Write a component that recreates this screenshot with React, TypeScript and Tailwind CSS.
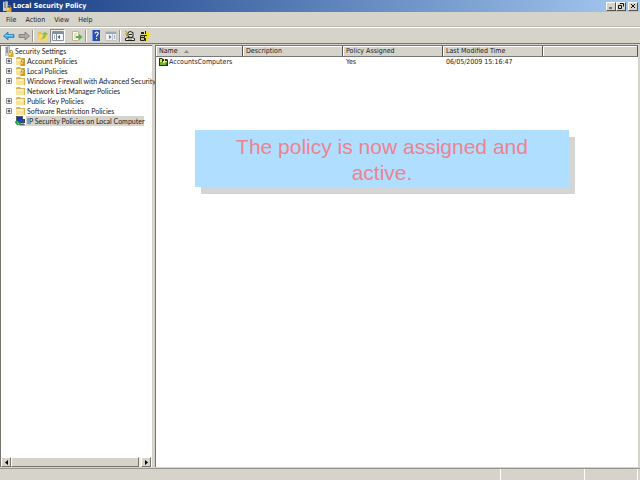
import type { ReactNode } from "react";
import clsx from "clsx";

type TreeItem = {
  label: string;
  icon: "locked" | "folder" | "ipsec";
  expandable: boolean;
  selected?: boolean;
};

const menus = ["File", "Action", "View", "Help"];

const treeItems: TreeItem[] = [
  { label: "Account Policies", icon: "locked", expandable: true },
  { label: "Local Policies", icon: "locked", expandable: true },
  { label: "Windows Firewall with Advanced Security", icon: "folder", expandable: true },
  { label: "Network List Manager Policies", icon: "folder", expandable: false },
  { label: "Public Key Policies", icon: "folder", expandable: true },
  { label: "Software Restriction Policies", icon: "folder", expandable: true },
  { label: "IP Security Policies on Local Computer", icon: "ipsec", expandable: false, selected: true },
];

const headerCell =
  "h-[11px] border-r border-b border-r-[#555] border-b-[#777] bg-[#d6d3cb] p-0 text-left font-normal shadow-[inset_1px_1px_0_#fff]";

function ServerLockIcon() {
  return (
    <svg viewBox="0 0 10 11" className="h-[11px] w-[10px] shrink-0">
      <path d="M1 1l4-1 1 1v9H1z" fill="#a9adb2" />
      <path d="M1 1h4v9H1z" fill="#c9cdd1" />
      <path d="M2 2h2M2 4h2M2 6h2" stroke="#59616b" />
      <path d="M6 7V5.500a1.200 1.200 0 0 1 2.400 0V7" fill="none" stroke="#8d7a42" />
      <path d="M4.500 6.500h5V11h-5z" fill="#dda929" />
      <path d="M5 7h2v2H5z" fill="#f6d66c" />
    </svg>
  );
}

function FolderIcon({ locked = false }: { locked?: boolean }) {
  return (
    <svg viewBox="0 0 11 10" className="h-[10px] w-[11px] shrink-0">
      <path d="M1 2l1-1h3l1 1h4v7H1z" fill="#d9b455" />
      <path d="M1 3h8v6H1z" fill="#f9e29a" />
      <path d="M2 3h6v2H2z" fill="#fdf1c2" />
      {locked && (
        <>
          <path d="M6.500 6V4.500a1.300 1.300 0 0 1 2.600 0V6" fill="none" stroke="#8d7a42" />
          <path d="M5.500 5.500H10V10H5.500z" fill="#d69b1d" />
          <path d="M6 6h2v2H6z" fill="#f0c44a" />
        </>
      )}
    </svg>
  );
}

function IpSecurityIcon() {
  return (
    <svg viewBox="0 0 11 10" className="h-[10px] w-[11px] shrink-0">
      <path d="M1 0h7v6H1z" fill="#59616b" />
      <path d="M2 1h5v4H2z" fill="#1530b0" />
      <path d="M4 3h6v4H4z" fill="#3a4350" />
      <path d="M5 4h4v2H5z" fill="#2045d6" />
      <path d="M4 7.500h5l1.500 2H5z" fill="#59616b" />
      <path d="M0 5.500L2.500 4v1.300L6 7 4.500 9.500 3 8.500v1L.5 7.500z" fill="#16a336" />
      <path d="M2 6l2 2" stroke="#80e68c" strokeWidth=".8" />
    </svg>
  );
}

function PolicyIcon() {
  return (
    <svg viewBox="0 0 10 8" className="h-[8px] w-[10px] shrink-0">
      <path d="M0 0h3l1 1h4l1 1v6H0z" fill="#1f3a10" />
      <path d="M1 4h7l-1 3H1z" fill="#6bb52f" />
      <path d="M1 1h2v3H1z" fill="#e5d84c" />
      <path d="M5 1h1v2h2v1H6v1H4V3h1z" fill="#f1ec6b" />
    </svg>
  );
}

function BackIcon() {
  return (
    <svg viewBox="0 0 12 10" className="h-[10px] w-[12px]">
      <path d="M.5 5l4.500-4v2.500h6v3H5V9z" fill="#38a5e6" stroke="#2476b4" strokeWidth=".7" />
      <path d="M2 4.700h8" stroke="#8fd7fb" />
    </svg>
  );
}

function ForwardIcon() {
  return (
    <svg viewBox="0 0 12 10" className="h-[10px] w-[12px]">
      <path d="M11.500 5L7 1v2.500H1v3h6V9z" fill="#a9a9a5" stroke="#777773" strokeWidth=".8" />
    </svg>
  );
}

function UpFolderIcon() {
  return (
    <svg viewBox="0 0 12 12" className="h-[12px] w-[12px]">
      <path d="M1 2h3l1 1h6v8H1z" fill="#e3c05c" />
      <path d="M2 4h9v7H1z" fill="#f3d67a" />
      <path d="M3 9c2 0 3.500-2 3.500-4.500H5L8 1.500l3 3H9C9 7.500 6.500 10 3 9z" fill="#8bbd45" />
    </svg>
  );
}

function ConsoleTreeIcon() {
  return (
    <svg viewBox="0 0 12 10" className="h-[10px] w-[12px]">
      <path d="M.5.5h11v9H.5z" fill="#f7f8f9" stroke="#8b929c" />
      <path d="M1 1h10v2H1z" fill="#7f8fa9" />
      <path d="M4.500 3v6" stroke="#8b929c" />
      <path d="M2 5h1M2 7h1" stroke="#4c6aa5" />
      <path d="M8 4v4L5.500 6z" fill="#2f7546" />
    </svg>
  );
}

function ExportIcon() {
  return (
    <svg viewBox="0 0 12 12" className="h-[12px] w-[12px]">
      <path d="M1.500 1.500h6v9h-6z" fill="#fcfbef" stroke="#c0b88c" />
      <path d="M3 4h3M3 6h2M3 8h3" stroke="#a8a8a0" strokeWidth=".7" />
      <path d="M5 6h3V4l3.500 3L8 10V8H5z" fill="#4ab54a" />
    </svg>
  );
}

function HelpIcon() {
  return (
    <svg viewBox="0 0 10 11" className="h-[11px] w-[10px]">
      <path d="M1 0h8v11H1z" fill="#2850b4" />
      <path d="M1 0h1v11H1z" fill="#7893d8" />
      <path d="M4 3.500c0-2 3.300-1.800 3.200 0C7.100 5 5.500 5 5.500 6.800M5.500 8v1.200" fill="none" stroke="#fff" strokeWidth="1.100" />
    </svg>
  );
}

function ActionPaneIcon() {
  return (
    <svg viewBox="0 0 12 10" className="h-[10px] w-[12px]">
      <path d="M.5.500h11v9H.5z" fill="#f0f0ef" stroke="#c2c3c4" />
      <path d="M1 1h10v2H1z" fill="#9aa7bd" />
      <path d="M7.500 3v6" stroke="#c2c3c4" />
      <path d="M4 4v4l2.500-2z" fill="#5e7693" />
      <path d="M9 5h1M9 7h1" stroke="#4c6aa5" />
    </svg>
  );
}

function CreatePolicyIcon() {
  return (
    <svg viewBox="0 0 12 12" className="h-[12px] w-[12px]">
      <path d="M1.500 10.500v-2L4 7.500h4l2.500 1v2z" fill="#f4f2e8" stroke="#222" />
      <path d="M4 2.500L6 1.500l3 1v4L7 7.500 4 6.500z" fill="#e8e4c8" stroke="#222" />
      <path d="M5 4.500h3" stroke="#222" />
      <path d="M1 1l2 1.500M1 4h2M2 6l1.500-1" stroke="#b49f18" />
      <path d="M4 9h4" stroke="#6b6b60" />
    </svg>
  );
}

function ManageFiltersIcon() {
  return (
    <svg viewBox="0 0 12 12" className="h-[12px] w-[12px]">
      <path d="M1.500 5.500h4v5h-4z" fill="#c9bf6a" stroke="#222" />
      <path d="M2 2h3v2H2zM2 7h3v1H2z" fill="#222" />
      <path d="M7 1h2v10H7z" fill="#efe01e" />
      <path d="M5 4h4V2l3 3-3 3V6H5z" fill="#efe01e" />
      <path d="M4 5.500h4M6.500 1v3M6.500 8v3" stroke="#222" />
    </svg>
  );
}

function ToolButton({ label, pressed = false, children }: { label: string; pressed?: boolean; children: ReactNode }) {
  return (
    <button
      type="button"
      aria-label={label}
      className={clsx(
        "flex h-[14px] w-[15px] items-center justify-center",
        pressed && "border border-t-[#8e8b84] border-r-white border-b-white border-l-[#8e8b84] bg-[#ecebe6]",
      )}
    >
      {children}
    </button>
  );
}

function ToolSeparator() {
  return <span className="mx-px h-3 w-[2px] border-l border-[#99968e] bg-white" />;
}

function WindowButton({ label, children }: { label: string; children: ReactNode }) {
  return (
    <button
      type="button"
      aria-label={label}
      className="flex h-[9px] w-[10px] items-center justify-center border border-t-white border-r-[#55534e] border-b-[#55534e] border-l-white bg-[#d6d3cb]"
    >
      <svg viewBox="0 0 6 6" className="h-[6px] w-[6px]" fill="none" stroke="#111">
        {children}
      </svg>
    </button>
  );
}

function ScrollButton({ label, path }: { label: string; path: string }) {
  return (
    <button
      type="button"
      aria-label={label}
      className="flex w-[10px] items-center justify-center border border-t-white border-r-[#77746d] border-b-[#77746d] border-l-white bg-[#d6d3cb]"
    >
      <svg viewBox="0 0 5 5" className="h-[5px] w-[5px]">
        <path d={path} fill="#000" />
      </svg>
    </button>
  );
}

function PolicyTree() {
  return (
    <nav
      aria-label="Console tree"
      className="flex w-[152px] shrink-0 flex-col border-t border-l border-[#77746d] bg-white font-['Lato',sans-serif]"
    >
      <div className="flex-1 whitespace-nowrap">
        <div className="flex h-[10px] items-center gap-px pl-[3px]">
          <ServerLockIcon />
          <span>Security Settings</span>
        </div>
        <ul>
          {treeItems.map((item) => (
            <li key={item.label} className="flex h-[10px] items-center pl-[5px]">
              {item.expandable ? (
                <button
                  type="button"
                  aria-label={`Expand ${item.label}`}
                  className="flex size-[6px] shrink-0 items-center justify-center"
                >
                  <svg viewBox="0 0 6 6" className="size-[6px]" fill="none">
                    <path d="M.5.5h5v5h-5z" stroke="#8e8e8e" />
                    <path d="M1.500 3h3M3 1.500v3" stroke="#222" strokeWidth=".9" />
                  </svg>
                </button>
              ) : (
                <span className="w-[6px] shrink-0" />
              )}
              <span className="ml-[3px] flex">
                {item.icon === "ipsec" ? <IpSecurityIcon /> : <FolderIcon locked={item.icon === "locked"} />}
              </span>
              <a href="#" className={clsx("pl-px leading-[10px]", item.selected && "bg-[#d6d3cb]")}>
                {item.label}
              </a>
            </li>
          ))}
        </ul>
      </div>
      <div className="mr-px flex h-[10px] bg-[#ecebe6]">
        <ScrollButton label="Scroll left" path="M4 0v5L1 2.500z" />
        <div className="mr-[2px] flex-1 border border-t-white border-r-[#77746d] border-b-[#77746d] border-l-white bg-[#d6d3cb]" />
        <ScrollButton label="Scroll right" path="M1 0v5l3-2.500z" />
      </div>
    </nav>
  );
}

function PolicyList() {
  return (
    <main className="relative min-w-0 flex-1 border-t border-l border-[#77746d] bg-white">
      <table className="w-full table-fixed border-separate border-spacing-0">
        <colgroup>
          <col className="w-[87px]" />
          <col className="w-[100px]" />
          <col className="w-[100px]" />
          <col className="w-[100px]" />
          <col />
        </colgroup>
        <thead>
          <tr>
            <th className={headerCell}>
              <button type="button" className="flex items-center gap-[6px] pl-[3px]">
                Name
                <svg viewBox="0 0 5 3" className="h-[3px] w-[5px]">
                  <path d="M0 3l2.500-3L5 3z" fill="#8e8b84" />
                </svg>
              </button>
            </th>
            <th className={headerCell}><button type="button" className="block pl-[3px]">Description</button></th>
            <th className={headerCell}><button type="button" className="block pl-[3px]">Policy Assigned</button></th>
            <th className={headerCell}><button type="button" className="block pl-[3px]">Last Modified Time</button></th>
            <td className={headerCell} />
          </tr>
        </thead>
        <tbody>
          <tr>
            <td className="h-[10px] p-0">
              <div className="flex items-center pl-[3px]">
                <PolicyIcon />
                AccountsComputers
              </div>
            </td>
            <td className="p-0" />
            <td className="p-0 pl-[3px]">Yes</td>
            <td className="p-0 pl-[3px]">06/05/2009 15:16:47</td>
            <td className="p-0" />
          </tr>
        </tbody>
      </table>

      <p className="absolute top-[84px] left-[39px] w-[374px] bg-[#b0deff] px-8 pt-1 pb-px text-center font-['Liberation_Sans',Arial,sans-serif] text-[21px] leading-[26px] text-[#ee8390] shadow-[6px_7px_0_#d5d5d5]">
        The policy is now assigned and active.
      </p>
    </main>
  );
}

export default function App() {
  return (
    <div className="flex h-screen flex-col overflow-hidden bg-[#d6d3cb] font-['DejaVu_Sans_Condensed','DejaVu_Sans',sans-serif] text-[7px] leading-[10px] text-[#222]">
      <header className="flex h-3 shrink-0 items-center bg-linear-to-r from-[#173b83] to-[#a6caf0] pr-[2px] pl-[2px]">
        <ServerLockIcon />
        <h1 className="ml-px flex-1 font-bold text-white">Local Security Policy</h1>
        <WindowButton label="Minimize">
          <path d="M1 5h3" />
        </WindowButton>
        <WindowButton label="Restore">
          <path d="M2 .5h3.500v3M.5 2.500h3v3h-3z" />
        </WindowButton>
        <span className="w-[2px]" />
        <WindowButton label="Close">
          <path d="M1 1l4 4M5 1L1 5" />
        </WindowButton>
      </header>

      <nav aria-label="Menu bar" className="flex h-[15px] shrink-0 items-center gap-[9px] border-b border-[#bbb8b0] pt-px pl-[6px]">
        {menus.map((menu) => (
          <button key={menu} type="button">
            {menu}
          </button>
        ))}
      </nav>

      <div role="toolbar" aria-label="Standard" className="flex h-4 shrink-0 items-center border-t border-white pl-px">
        <ToolButton label="Back"><BackIcon /></ToolButton>
        <ToolButton label="Forward"><ForwardIcon /></ToolButton>
        <ToolSeparator />
        <ToolButton label="Up one level"><UpFolderIcon /></ToolButton>
        <ToolButton label="Show console tree" pressed><ConsoleTreeIcon /></ToolButton>
        <span className="w-1" />
        <ToolButton label="Export list"><ExportIcon /></ToolButton>
        <ToolSeparator />
        <ToolButton label="Help"><HelpIcon /></ToolButton>
        <ToolButton label="Show action pane"><ActionPaneIcon /></ToolButton>
        <ToolSeparator />
        <ToolButton label="Create IP security policy"><CreatePolicyIcon /></ToolButton>
        <ToolButton label="Manage filter lists"><ManageFiltersIcon /></ToolButton>
      </div>

      <div className="flex min-h-0 flex-1 gap-[3px] border-t border-[#77746d] pt-px pr-[2px] pb-px">
        <PolicyTree />
        <PolicyList />
      </div>

      <footer className="flex h-3 shrink-0 gap-[2px] border-t border-[#99968e] pr-[2px]">
        <div className="flex-1 border-r border-white" />
        <div className="w-[82px] border-r border-white" />
        <div className="w-[51px] border-r border-white" />
      </footer>
    </div>
  );
}
